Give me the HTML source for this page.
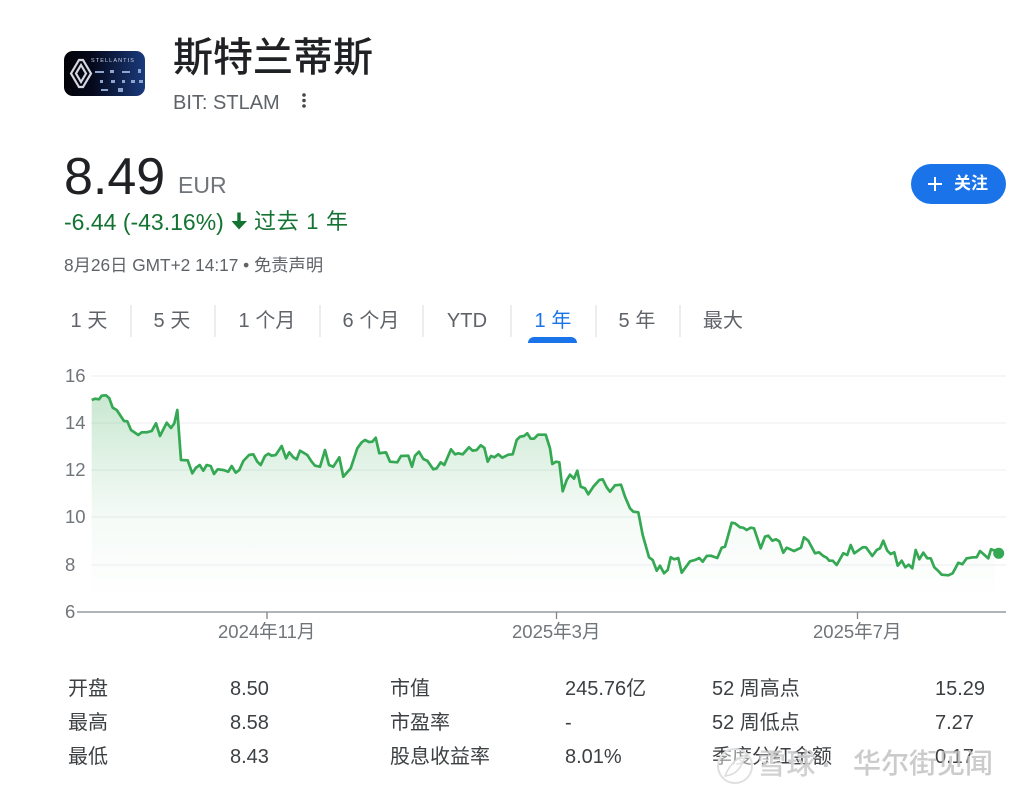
<!DOCTYPE html>
<html lang="zh"><head><meta charset="utf-8"><title>斯特兰蒂斯</title>
<style>
html,body{margin:0;padding:0;background:#fff}
body{width:1024px;height:795px;position:relative;overflow:hidden;font-family:"Liberation Sans","Noto Sans CJK SC",sans-serif}
.t{position:absolute;white-space:nowrap;line-height:1}
.tab{position:absolute;top:311px;font-size:20px;line-height:20px;color:#5f6368;white-space:nowrap;letter-spacing:.1px;transform:translateX(-50%)}
.sep{position:absolute;top:305px;width:2px;height:32px;background:#ebedef}
.s{position:absolute;font-size:20px;line-height:22px;color:#3c4043;white-space:nowrap}
.ax{position:absolute;font-size:18.500px;line-height:18px;color:#70757a;white-space:nowrap}
</style></head><body>

<svg style="position:absolute;left:64px;top:51px" width="82" height="46" viewBox="0 0 82 46">
<defs><linearGradient id="lg" x1="0" x2="1" y1="0" y2="0"><stop offset="0" stop-color="#020308"/><stop offset=".35" stop-color="#05091c"/><stop offset="1" stop-color="#1a3a7c"/></linearGradient></defs>
<rect width="81" height="45" rx="9" fill="url(#lg)"/>
<path d="M15 9H19L27 22.500L19 36H15L7 22.500Z" fill="none" stroke="#d5d8dc" stroke-width="2.200"/>
<path d="M17 14L22 22.500L17 31L12 22.500Z" fill="none" stroke="#d5d8dc" stroke-width="2.200"/>
<text x="27" y="11" font-size="5.500" fill="#c9d3e6" letter-spacing="1.100" font-family="Liberation Sans">STELLANTIS</text>
<g fill="#8ea5cf"><rect x="31" y="20" width="9" height="2"/><rect x="46" y="19" width="4" height="3"/><rect x="58" y="20" width="8" height="2"/><rect x="74" y="18" width="3" height="4"/><rect x="36" y="29" width="3" height="3"/><rect x="47" y="29" width="4" height="3"/><rect x="58" y="29" width="3" height="3"/><rect x="67" y="29" width="4" height="3"/><rect x="75" y="29" width="4" height="3"/><rect x="37" y="38" width="7" height="2"/><rect x="54" y="37" width="5" height="4"/></g>
</svg>

<div class="t" style="left:173px;top:35px;font-size:40px;line-height:46px;color:#202124;font-weight:500">斯特兰蒂斯</div>
<div class="t" style="left:173px;top:92px;font-size:20px;line-height:22px;color:#5f6368">BIT: STLAM</div>
<svg style="position:absolute;left:300px;top:92px" width="8" height="18"><circle cx="4" cy="3" r="1.800" fill="#444746"/><circle cx="4" cy="8.500" r="1.800" fill="#444746"/><circle cx="4" cy="14" r="1.800" fill="#444746"/></svg>

<div class="t" style="left:64px;top:148px;font-size:52px;line-height:58px;color:#202124">8.49</div>
<div class="t" style="left:178px;top:172px;font-size:23px;line-height:26px;color:#70757a">EUR</div>
<div class="t" style="left:64px;top:209px;font-size:23px;line-height:26px;color:#137333">-6.44 (-43.16%)</div>
<svg style="position:absolute;left:230px;top:211px" width="18" height="20"><path d="M7.300 1.500H10.700V10H17L9 18.500L1.500 10H7.300Z" fill="#137333"/></svg>
<div class="t" style="left:254px;top:209px;font-size:22px;line-height:25px;color:#137333;letter-spacing:.7px">过去 1 年</div>
<div class="t" style="left:64px;top:255px;font-size:17.300px;line-height:20px;color:#5f6368">8月26日 GMT+2 14:17 • 免责声明</div>

<div style="position:absolute;left:911px;top:164px;width:95px;height:40px;border-radius:20px;background:#1a73e8"></div>
<svg style="position:absolute;left:926px;top:175px" width="18" height="18"><path d="M9 2V16M2 9H16" stroke="#fff" stroke-width="2"/></svg>
<div class="t" style="left:954px;top:174px;font-size:17px;line-height:20px;color:#fff;font-weight:700">关注</div>

<div class="tab" style="left:89px">1 天</div><div class="sep" style="left:130px"></div>
<div class="tab" style="left:172px">5 天</div><div class="sep" style="left:214px"></div>
<div class="tab" style="left:267px">1 个月</div><div class="sep" style="left:319px"></div>
<div class="tab" style="left:371px">6 个月</div><div class="sep" style="left:422px"></div>
<div class="tab" style="left:467px">YTD</div><div class="sep" style="left:510px"></div>
<div class="tab" style="left:553px;color:#1a73e8">1 年</div><div class="sep" style="left:595px"></div>
<div class="tab" style="left:637px">5 年</div><div class="sep" style="left:679px"></div>
<div class="tab" style="left:723px">最大</div>
<div style="position:absolute;left:528px;top:337px;width:49px;height:6px;background:#1a73e8;border-radius:6px 6px 0 0"></div>

<svg style="position:absolute;left:0;top:0" width="1024" height="640">
<defs><linearGradient id="g" gradientUnits="userSpaceOnUse" x1="0" x2="0" y1="395" y2="600"><stop offset="0" stop-color="#34a853" stop-opacity=".27"/><stop offset=".366" stop-color="#34a853" stop-opacity=".13"/><stop offset=".595" stop-color="#34a853" stop-opacity=".05"/><stop offset="1" stop-color="#34a853" stop-opacity="0"/></linearGradient></defs>
<g stroke="#f3f4f5" stroke-width="1.500"><path d="M91 376H1006M91 423H1006M91 470H1006M91 517H1006M91 565H1006"/></g>
<path fill="url(#g)" d="M91.700 600V400 L95 398.700 99 399.300 101.700 395.700 106 395.300 109.300 398.300 112.700 407.700 116.700 410 124 421 127.300 421.300 131 430 138.300 435 141.700 432.300 146.700 432.300 151.700 431 156 423.300 160 436 166.700 422.700 171 428 174.300 423.300 177.300 410 181 460 187.700 460.300 192.300 473.300 195.700 468 199.700 465 203.300 470.700 206.700 465 210.700 466 214 474 217.700 469.300 223.300 470 228.300 471.700 231.700 466 235.700 472.700 239.300 470 243.300 461 249 455 253.300 454.300 257.300 461.700 260.700 465 265 456 268.300 453.700 271.700 455.700 275.700 455 281.700 446 286 458.300 289.300 452.300 293.300 457.300 296.700 459.300 300 450.700 307.300 455 311.700 461.700 315 465.700 320 466.700 325 450 329 465 333.300 466.700 339.300 457.300 343.300 476.700 350.700 468.300 357.300 448.300 361.700 442.300 365 440 369 442 372.300 441.700 375.700 437.700 379.300 453.300 386 452.300 390 461.700 397.300 462.300 401 456 408.300 455.700 412 466.700 415 455.700 419 451.700 423.300 459 427.300 460.700 433.300 469.300 436.700 468.300 440.700 462.300 444.300 465 451 449.300 455 454.300 458.300 453.300 462.700 454.300 469 447.300 472.700 450.700 476.700 450 480.700 445.300 484.300 447.700 487.700 461.700 491 456 494.300 457.300 498.300 454.300 502.300 457.700 508.300 454.700 512.700 454.300 516.700 440 520 436.700 524 436 527.300 433.300 530.700 438.700 534 438.700 538 434.700 545.700 434.700 550 448.300 552.300 464 556 461.700 559.300 462.300 562.700 491.300 566.700 480 570 474.700 574 478.700 577.300 470.700 580.700 486.700 585 488.300 588.300 494.300 593.300 486.700 599.300 480 602.700 479.300 606.700 487.300 610 491.700 615 485.300 621 484.700 625 496.700 630 508.300 633.300 511.700 638.300 512.300 642.700 535 649 557.300 652.700 560 656.700 570.700 660 565.700 664 573.300 667.700 570 670.700 557.300 674.300 559.300 678.300 558 681.700 572.700 690 561.300 695 560 699.300 558 702.700 561.700 706.700 556 710.700 555.700 717.300 558 721.700 547.700 725 546.700 731.700 522.700 735 523.300 740 527.300 743.300 527.700 746.700 530 750.700 527.700 754 528.300 760.700 548.300 765 536.700 768.300 535.700 772.300 540.700 776 539.300 779.300 541.300 783.300 552.700 786.700 547.700 794 551 801 547.700 804 537.300 808.300 540.700 815 553.300 819 552.300 823.300 556 826.700 557.700 829.300 560.700 832.700 560.700 836.700 565 843.300 553.300 847.300 555 850.700 545 854.300 553.300 862.700 547.300 866 547.300 872.300 556 876.700 550 880 548.300 883.300 540.700 887.300 550.700 890.700 554 894.300 552.300 897.700 565.700 901.700 560.700 905.300 567.300 908.700 564.700 912.300 568.300 915.700 550 919.300 559.300 923.300 552.700 927.300 558.300 930.700 558.300 934.300 567.300 938.300 571 941.700 574.700 948.300 575.300 952.700 573.300 958.300 562.700 962.300 564.300 966.700 558.300 973.300 557.300 976.700 557.300 980 551 988.300 558.300 991 549.300 995 550.700 V600Z"/>
<path fill="none" stroke="#34a853" stroke-width="2.700" stroke-linejoin="round" d="M91.700 400L95 398.700 99 399.300 101.700 395.700 106 395.300 109.300 398.300 112.700 407.700 116.700 410 124 421 127.300 421.300 131 430 138.300 435 141.700 432.300 146.700 432.300 151.700 431 156 423.300 160 436 166.700 422.700 171 428 174.300 423.300 177.300 410 181 460 187.700 460.300 192.300 473.300 195.700 468 199.700 465 203.300 470.700 206.700 465 210.700 466 214 474 217.700 469.300 223.300 470 228.300 471.700 231.700 466 235.700 472.700 239.300 470 243.300 461 249 455 253.300 454.300 257.300 461.700 260.700 465 265 456 268.300 453.700 271.700 455.700 275.700 455 281.700 446 286 458.300 289.300 452.300 293.300 457.300 296.700 459.300 300 450.700 307.300 455 311.700 461.700 315 465.700 320 466.700 325 450 329 465 333.300 466.700 339.300 457.300 343.300 476.700 350.700 468.300 357.300 448.300 361.700 442.300 365 440 369 442 372.300 441.700 375.700 437.700 379.300 453.300 386 452.300 390 461.700 397.300 462.300 401 456 408.300 455.700 412 466.700 415 455.700 419 451.700 423.300 459 427.300 460.700 433.300 469.300 436.700 468.300 440.700 462.300 444.300 465 451 449.300 455 454.300 458.300 453.300 462.700 454.300 469 447.300 472.700 450.700 476.700 450 480.700 445.300 484.300 447.700 487.700 461.700 491 456 494.300 457.300 498.300 454.300 502.300 457.700 508.300 454.700 512.700 454.300 516.700 440 520 436.700 524 436 527.300 433.300 530.700 438.700 534 438.700 538 434.700 545.700 434.700 550 448.300 552.300 464 556 461.700 559.300 462.300 562.700 491.300 566.700 480 570 474.700 574 478.700 577.300 470.700 580.700 486.700 585 488.300 588.300 494.300 593.300 486.700 599.300 480 602.700 479.300 606.700 487.300 610 491.700 615 485.300 621 484.700 625 496.700 630 508.300 633.300 511.700 638.300 512.300 642.700 535 649 557.300 652.700 560 656.700 570.700 660 565.700 664 573.300 667.700 570 670.700 557.300 674.300 559.300 678.300 558 681.700 572.700 690 561.300 695 560 699.300 558 702.700 561.700 706.700 556 710.700 555.700 717.300 558 721.700 547.700 725 546.700 731.700 522.700 735 523.300 740 527.300 743.300 527.700 746.700 530 750.700 527.700 754 528.300 760.700 548.300 765 536.700 768.300 535.700 772.300 540.700 776 539.300 779.300 541.300 783.300 552.700 786.700 547.700 794 551 801 547.700 804 537.300 808.300 540.700 815 553.300 819 552.300 823.300 556 826.700 557.700 829.300 560.700 832.700 560.700 836.700 565 843.300 553.300 847.300 555 850.700 545 854.300 553.300 862.700 547.300 866 547.300 872.300 556 876.700 550 880 548.300 883.300 540.700 887.300 550.700 890.700 554 894.300 552.300 897.700 565.700 901.700 560.700 905.300 567.300 908.700 564.700 912.300 568.300 915.700 550 919.300 559.300 923.300 552.700 927.300 558.300 930.700 558.300 934.300 567.300 938.300 571 941.700 574.700 948.300 575.300 952.700 573.300 958.300 562.700 962.300 564.300 966.700 558.300 973.300 557.300 976.700 557.300 980 551 988.300 558.300 991 549.300 995 550.700"/>
<circle cx="998.700" cy="553.300" r="5.500" fill="#34a853"/>
<path d="M77 612H1006M267 612V619M556.500 612V619M857.500 612V619" stroke="#80868b" stroke-width="1.300" fill="none"/>
</svg>

<div class="ax" style="left:65px;top:367px">16</div>
<div class="ax" style="left:65px;top:414px">14</div>
<div class="ax" style="left:65px;top:461px">12</div>
<div class="ax" style="left:65px;top:508px">10</div>
<div class="ax" style="left:65px;top:556px">8</div>
<div class="ax" style="left:65px;top:603px">6</div>
<div class="ax" style="left:218px;top:623px">2024年11月</div>
<div class="ax" style="left:512px;top:623px">2025年3月</div>
<div class="ax" style="left:813px;top:623px">2025年7月</div>

<div class="s" style="left:68px;top:678px">开盘</div><div class="s" style="left:230px;top:678px">8.50</div>
<div class="s" style="left:390px;top:678px">市值</div><div class="s" style="left:565px;top:678px">245.76亿</div>
<div class="s" style="left:712px;top:678px">52 周高点</div><div class="s" style="left:935px;top:678px">15.29</div>
<div class="s" style="left:68px;top:712px">最高</div><div class="s" style="left:230px;top:712px">8.58</div>
<div class="s" style="left:390px;top:712px">市盈率</div><div class="s" style="left:565px;top:712px">-</div>
<div class="s" style="left:712px;top:712px">52 周低点</div><div class="s" style="left:935px;top:712px">7.27</div>
<div class="s" style="left:68px;top:746px">最低</div><div class="s" style="left:230px;top:746px">8.43</div>
<div class="s" style="left:390px;top:746px">股息收益率</div><div class="s" style="left:565px;top:746px">8.01%</div>
<div class="s" style="left:712px;top:746px">季度分红金额</div><div class="s" style="left:935px;top:746px">0.17</div>

<svg style="position:absolute;left:714px;top:745px" width="42" height="42"><circle cx="21" cy="21" r="17" fill="#fff" fill-opacity=".45" stroke="#e0e0e0" stroke-width="2"/><path d="M11 31C17 16 26 12 32 10C28 20 24 30 11 31Z" fill="#fff" fill-opacity=".7" stroke="#dcdcdc" stroke-width="1.500"/></svg>
<div class="t" style="left:757px;top:750px;font-size:29px;line-height:30px;color:rgba(190,190,190,.7);font-weight:500;letter-spacing:.5px;text-shadow:1px 1px 0 rgba(255,255,255,.7)">雪球</div>
<div class="t" style="left:822px;top:750px;font-size:28px;line-height:30px;color:rgba(190,190,190,.8);font-weight:700">·</div>
<div class="t" style="left:853px;top:749px;font-size:28px;line-height:30px;color:rgba(190,190,190,.8);font-weight:500">华尔街见闻</div>
</body></html>
